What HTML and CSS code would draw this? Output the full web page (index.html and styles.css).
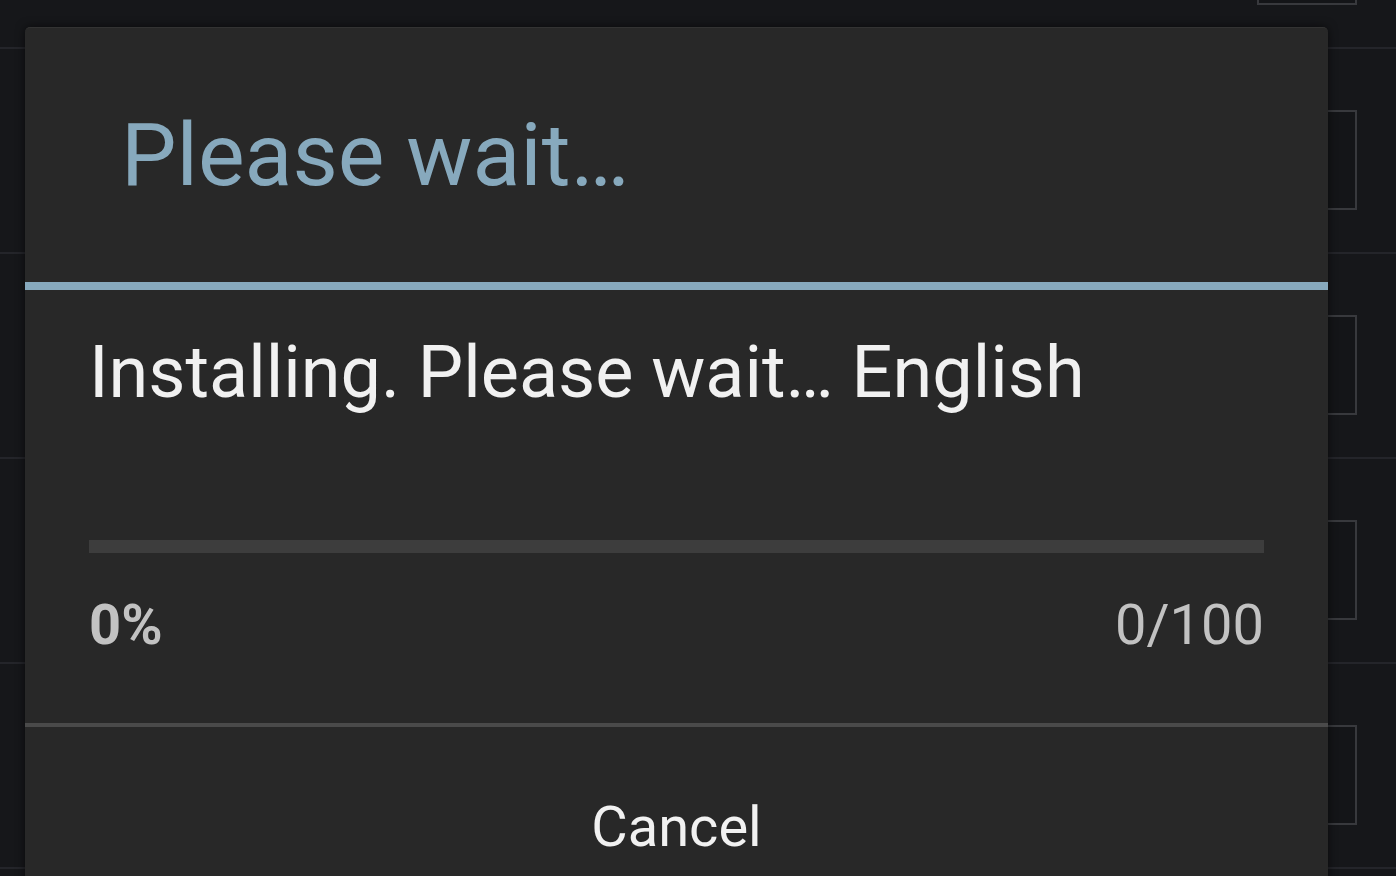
FILE: index.html
```html
<!DOCTYPE html>
<html lang="en">
<head>
    <meta charset="UTF-8">
    <meta name="viewport" content="width=device-width, initial-scale=1.0">
    <title>Please wait...</title>
    <link rel="stylesheet" href="styles.css">
</head>
<body>
    <div class="backdrop">
        <div class="row"><span class="slot"></span></div>
        <div class="row"><span class="slot"></span></div>
        <div class="row"><span class="slot"></span></div>
        <div class="row"><span class="slot"></span></div>
        <div class="row"><span class="slot"></span></div>
        <div class="row"><span class="slot"></span></div>
    </div>

    <div class="dialog">
        <div class="dialog-title">
            <h1>Please wait…</h1>
        </div>
        <div class="dialog-body">
            <p class="message">Installing. Please wait… English</p>
            <div class="progress"><div class="progress-fill" style="width: 0%"></div></div>
            <div class="progress-info">
                <span class="percent">0%</span>
                <span class="count">0/100</span>
            </div>
        </div>
        <div class="dialog-actions">
            <button class="btn">Cancel</button>
        </div>
    </div>
</body>
</html>
```

FILE: styles.css
```css
* {
    margin: 0;
    padding: 0;
    box-sizing: border-box;
}

html, body {
    height: 100%;
    overflow: hidden;
}

body {
    font-family: Roboto, 'Noto Sans', sans-serif;
    background: #16171a;
    color: #f1f1f1;
}

/* list behind the dialog */
.backdrop {
    margin-top: -156px;
    display: flex;
    flex-direction: column;
}

.row {
    height: 205px;
    border-bottom: 2px solid #24252a;
    padding-top: 61px;
    padding-left: 1257px;
}

.slot {
    display: block;
    width: 100px;
    height: 100px;
    border: 2px solid #38393d;
    background: #141518;
}

/* dialog */
.dialog {
    position: absolute;
    left: 25px;
    top: 27px;
    width: 1303px;
    height: 900px;
    background: #282828;
    border-radius: 5px 5px 0 0;
    border-top: 1px solid #333;
    box-shadow: 0 0 10px rgba(0, 0, 0, 0.6);
    display: flex;
    flex-direction: column;
}

.dialog-title {
    height: 262px;
    padding: 83px 0 0 96px;
    border-bottom: 8px solid #87a9bd;
}

.dialog-title h1 {
    font-size: 88px;
    font-weight: 400;
    color: #87a9bd;
    line-height: 1;
}

.dialog-body {
    padding: 47px 64px 0;
    height: 437px;
    border-bottom: 4px solid #4a4a4a;
}

.message {
    font-size: 72px;
    line-height: 1;
}

.progress {
    margin-top: 131px;
    height: 13px;
    background: #3d3d3d;
}

.progress-fill {
    height: 100%;
    background: #87a9bd;
}

.progress-info {
    margin-top: 44px;
    display: flex;
    justify-content: space-between;
    font-size: 56px;
    line-height: 1;
    color: #c2c2c2;
}

.percent {
    font-weight: 700;
}

.dialog-actions {
    display: flex;
    justify-content: center;
}

.btn {
    background: none;
    border: none;
    font-family: inherit;
    font-size: 56px;
    color: #f1f1f1;
    padding: 72px 40px;
    line-height: 1;
}
```
